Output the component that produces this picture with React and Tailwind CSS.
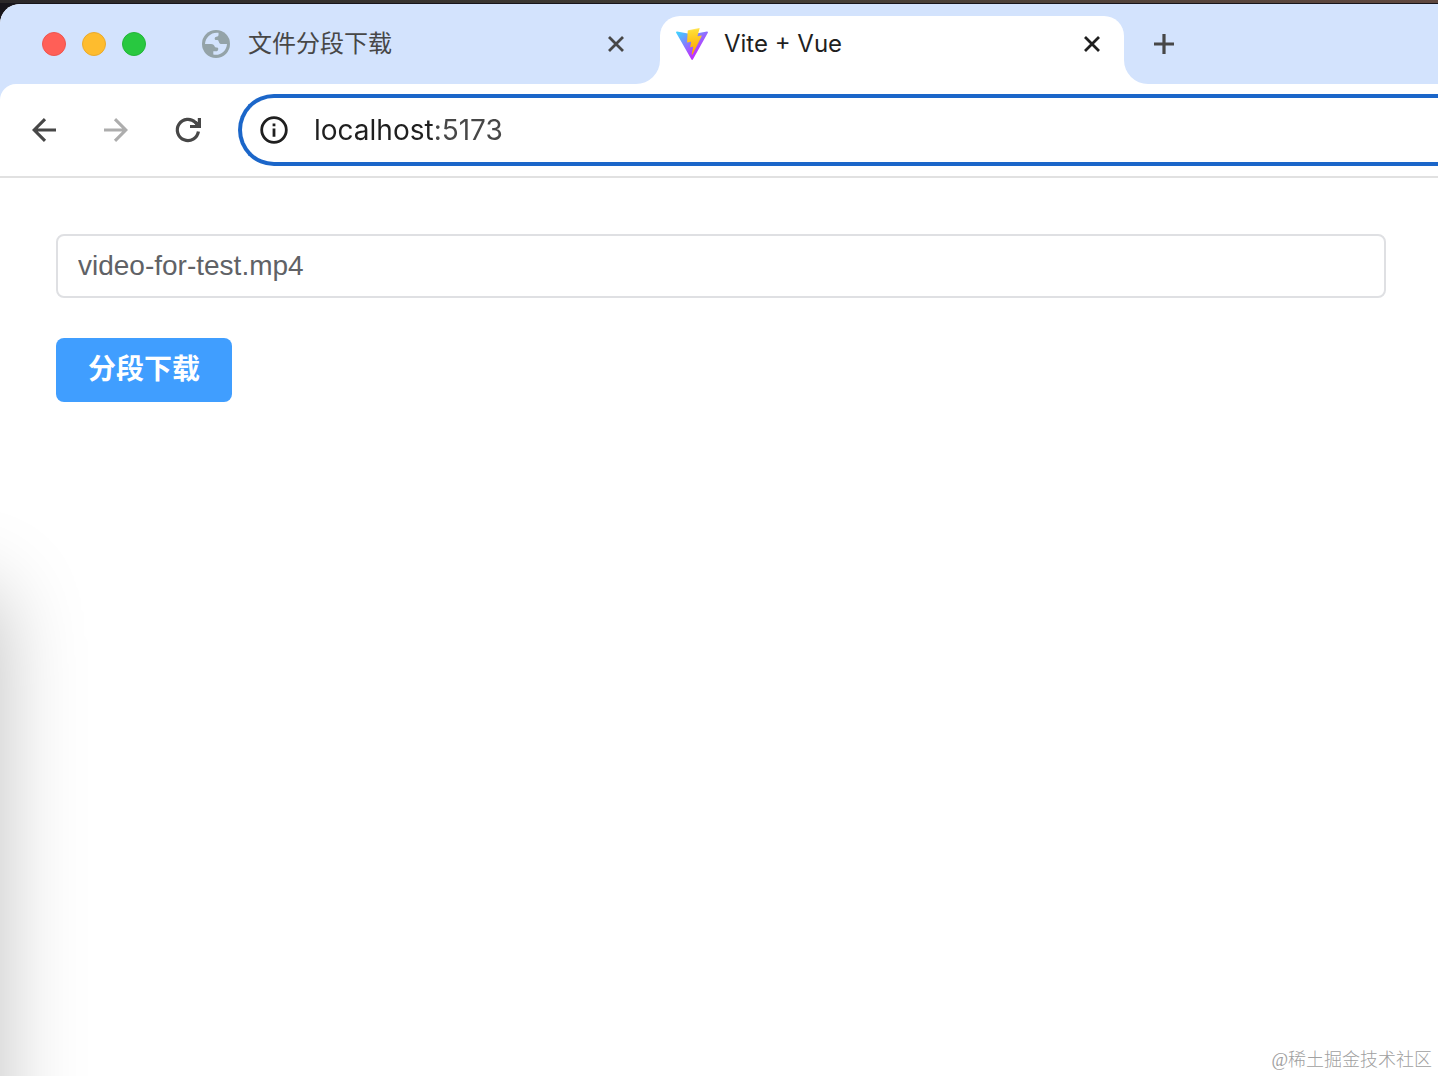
import React, { useState } from 'react';

const CloseIcon = () => (
  <svg className="h-4 w-4" viewBox="0 0 16 16" fill="none" stroke="currentColor" strokeWidth="2.8" aria-hidden="true">
    <path d="M1 1l14 14M15 1L1 15" />
  </svg>
);

const GlobeIcon = () => (
  <svg className="h-7 w-7 shrink-0" viewBox="0 0 28 28" aria-hidden="true">
    <circle cx="14" cy="14" r="14" fill="#94a3a8" />
    <path
      fill="#d3e3fd"
      d="M16.500 2.800C9.500 1.800 3.500 7 3 14h6c2.200 0 3.200 1 3.600 2.300.3 1 1.100 1.300 2.400 1.300 1 0 1.400.8 1.200 1.800-.2 1.300-1.200 1.800-2.400 1.800H11.300v3.400c7 1.500 13.300-3.400 13.700-10.600h-4.800c-2.200 0-3.200-1-3.500-2.600-.2-1.100-.9-1.400-2.300-1.400-1.400 0-2-1-1.600-2.100.4-1 1.300-1.200 2.400-1.400 1.200-.2 1.600-1.200 1.300-3.700Z"
    />
  </svg>
);

const ViteLogo = () => (
  <svg className="h-8 w-8 shrink-0" viewBox="0 0 256 257" aria-hidden="true">
    <defs>
      <linearGradient id="viteBody" x1="-.828%" x2="57.636%" y1="7.652%" y2="78.411%">
        <stop offset="0%" stopColor="#41D1FF" />
        <stop offset="100%" stopColor="#BD34FE" />
      </linearGradient>
      <linearGradient id="viteBolt" x1="43.376%" x2="50.316%" y1="2.242%" y2="89.03%">
        <stop offset="0%" stopColor="#FFEA83" />
        <stop offset="8.333%" stopColor="#FFDD35" />
        <stop offset="100%" stopColor="#FFA800" />
      </linearGradient>
    </defs>
    <path
      fill="url(#viteBody)"
      d="M255.153 37.938L134.897 252.976c-2.483 4.44-8.862 4.466-11.382.048L.875 37.958c-2.746-4.814 1.371-10.646 6.827-9.67l120.385 21.517a6.537 6.537 0 0 0 2.322-.004l117.867-21.483c5.438-.991 9.574 4.796 6.877 9.62Z"
    />
    <path
      fill="url(#viteBolt)"
      d="M185.432.063L96.44 17.501a3.268 3.268 0 0 0-2.634 3.014l-5.474 92.456a3.268 3.268 0 0 0 3.997 3.378l24.777-5.718c2.318-.535 4.413 1.507 3.936 3.838l-7.361 36.047c-.495 2.426 1.782 4.5 4.151 3.78l15.304-4.649c2.372-.72 4.652 1.36 4.15 3.788l-11.698 56.621c-.732 3.542 3.979 5.473 5.943 2.437l1.313-2.028l72.516-144.72c1.215-2.423-.88-5.186-3.54-4.672l-25.505 4.922c-2.396.462-4.435-1.77-3.759-4.114l16.646-57.705c.677-2.35-1.37-4.583-3.769-4.113Z"
    />
  </svg>
);

const ArrowIcon = ({ className }) => (
  <svg className={className} viewBox="0 0 36 36" fill="none" stroke="currentColor" strokeWidth="3.1" aria-hidden="true">
    <path d="M30 18H8.500M19 7.200L8.200 18 19 28.800" />
  </svg>
);

const ReloadIcon = () => (
  <svg className="h-9 w-9" viewBox="0 0 36 36" aria-hidden="true">
    <path
      d="M28.400 19.500A10.600 10.600 0 1 1 25.500 10.500L28 13"
      fill="none"
      stroke="currentColor"
      strokeWidth="3.2"
    />
    <path fill="currentColor" d="M27.800 6H31V16H20V12.900H25.500L24 11L26.500 9L27.800 10.300Z" />
  </svg>
);

const InfoIcon = () => (
  <svg className="h-7 w-7" viewBox="0 0 28 28" aria-hidden="true">
    <circle cx="14" cy="14" r="12.300" fill="none" stroke="currentColor" strokeWidth="2.800" />
    <path fill="currentColor" d="M12.600 12.500h2.800v8.300h-2.800zM12.600 7.400h2.800v2.800h-2.800z" />
  </svg>
);

const TabBar = () => (
  <div className="flex h-20 bg-white">
    <div className="flex w-[660px] shrink-0 items-center rounded-br-3xl bg-[#d3e3fd] pr-8 pl-10">
      <div className="flex gap-3">
        <button type="button" aria-label="Close window" className="h-7 w-7 p-0.5">
          <span className="block h-6 w-6 rounded-full border border-[#ee554e] bg-[#ff5f57]" />
        </button>
        <button type="button" aria-label="Minimize window" className="h-7 w-7 p-0.5">
          <span className="block h-6 w-6 rounded-full border border-[#eaaa2c] bg-[#febc2e]" />
        </button>
        <button type="button" aria-label="Zoom window" className="h-7 w-7 p-0.5">
          <span className="block h-6 w-6 rounded-full border border-[#22b638] bg-[#28c840]" />
        </button>
      </div>
      <div className="ml-[54px] flex flex-1 items-center justify-between text-[#474747]">
        <button type="button" className="flex items-center gap-[18px] text-2xl">
          <GlobeIcon />
          文件分段下载
        </button>
        <button type="button" aria-label="Close tab" className="flex h-6 w-6 items-center justify-center">
          <CloseIcon />
        </button>
      </div>
    </div>

    <div className="w-[464px] shrink-0 bg-[#d3e3fd] pt-3">
      <div className="h-full rounded-t-[20px] bg-white px-4">
        <div className="flex h-14 items-center justify-between pr-1 text-[#1f1f1f]">
          <button type="button" className="flex items-center gap-4 text-2xl">
            <ViteLogo />
            Vite + Vue
          </button>
          <button type="button" aria-label="Close tab" className="flex h-6 w-6 items-center justify-center">
            <CloseIcon />
          </button>
        </div>
      </div>
    </div>

    <div className="flex flex-1 items-center rounded-bl-3xl bg-[#d3e3fd] pl-6 text-[#474747]">
      <button type="button" aria-label="New tab" className="flex h-8 w-8 items-center justify-center">
        <svg className="h-5 w-5" viewBox="0 0 20 20" stroke="currentColor" strokeWidth="3.2" aria-hidden="true">
          <path d="M10 0v20M0 10h20" />
        </svg>
      </button>
    </div>
  </div>
);

const Toolbar = () => {
  const [url, setUrl] = useState('localhost:5173');

  return (
    <div className="bg-[#d3e3fd]">
      <div className="flex items-center rounded-tl-2xl border-b-2 border-[#e1e1e1] bg-white py-2.5 pl-[26px]">
        <div className="flex gap-9 text-[#474747]">
          <button type="button" aria-label="Back">
            <ArrowIcon className="h-9 w-9" />
          </button>
          <button type="button" aria-label="Forward" className="text-[#adadad]">
            <ArrowIcon className="h-9 w-9 rotate-180" />
          </button>
          <button type="button" aria-label="Reload">
            <ReloadIcon />
          </button>
        </div>
        <div className="ml-8 flex h-[72px] flex-1 items-center rounded-l-full border-4 border-r-0 border-[#1b66c9] pl-[18px]">
          <button type="button" aria-label="View site information" className="text-[#1f1f1f]">
            <InfoIcon />
          </button>
          {/* host is darker than the port */}
          <input
            type="text"
            aria-label="Address"
            value={url}
            onChange={(e) => setUrl(e.target.value)}
            className="ml-[26px] flex-1 bg-linear-to-r from-[#1f1f1f] from-[120px] to-[#474747] to-[120px] bg-clip-text text-[28px] text-transparent outline-none"
          />
        </div>
      </div>
    </div>
  );
};

const DownloadPage = () => {
  const [fileName, setFileName] = useState('video-for-test.mp4');

  const handleSubmit = (e) => {
    e.preventDefault();
  };

  return (
    <main className="relative flex flex-1 flex-col overflow-hidden bg-white font-['Liberation_Sans','Noto_Sans_CJK_SC',sans-serif]">
      <form onSubmit={handleSubmit} className="flex flex-col items-start gap-10 pt-14 pr-[52px] pl-14">
        <input
          type="text"
          aria-label="File name"
          value={fileName}
          onChange={(e) => setFileName(e.target.value)}
          className="h-16 w-full rounded-lg border-2 border-[#dfe0e3] bg-white px-5 text-[28px] text-[#606266] outline-none"
        />
        <button type="submit" className="h-16 rounded-lg bg-[#409eff] px-8 text-[28px] font-bold text-white">
          分段下载
        </button>
      </form>

      {/* shadow cast by the window on the left */}
      <div className="pointer-events-none absolute top-[412px] right-full -bottom-40 w-96 rounded-3xl shadow-[0_0_84px_rgba(0,0,0,0.25)]" />

      <p className="mt-auto self-end pr-1.5 pb-1 font-['Liberation_Serif','Noto_Sans_CJK_SC',serif] text-lg leading-6 font-light text-[#a0a0a0]">
        @稀土掘金技术社区
      </p>
    </main>
  );
};

const App = () => (
  <div className="flex min-h-screen flex-col bg-[#17151b] font-['Inter','Noto_Sans_CJK_SC',sans-serif]">
    <div className="h-1 border-b border-[#17151b] bg-linear-to-r from-[#2b2829] via-[#403c34] to-[#5f483f]" />
    <div className="flex flex-1 flex-col overflow-hidden rounded-tl-[20px]">
      <TabBar />
      <Toolbar />
      <DownloadPage />
    </div>
  </div>
);

export default App;
